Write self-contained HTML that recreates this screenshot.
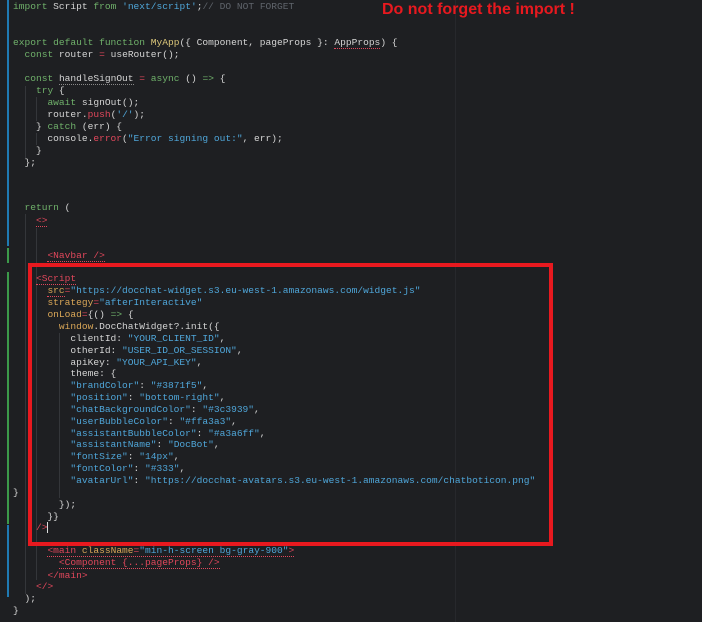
<!DOCTYPE html>
<html><head><meta charset="utf-8"><style>
html,body{margin:0;padding:0;background:#1e1f22;width:702px;height:622px;overflow:hidden;position:relative}
.l{position:absolute;left:13px;height:12px;line-height:12px;font-family:"Liberation Mono",monospace;font-size:9.57px;color:#d4d4d4;white-space:pre}
.k{color:#6fb06a}.s{color:#4fa6d9}.c{color:#5f646b}.f{color:#dcc77a}.r{color:#e0475b}.a{color:#d9a657}.w{color:#d4d4d4}
.u{border-bottom:1px dotted #e0475b}
.bar{position:absolute;left:7px;width:2px}
.g{position:absolute;width:1px;background:#34363a}
</style></head><body>
<div class="g" style="left:455px;top:0;height:622px;background:#27282c"></div>
<div class="bar" style="top:0;height:246px;background:#1f7ab3"></div>
<div class="bar" style="top:248px;height:15px;background:#3c9a4a"></div>
<div class="bar" style="top:272px;height:252px;background:#3c9a4a"></div>
<div class="bar" style="top:525px;height:72px;background:#1f7ab3"></div>
<div class="g" style="left:25px;top:86px;height:72px"></div>
<div class="g" style="left:36px;top:97px;height:24px"></div>
<div class="g" style="left:36px;top:133px;height:12px"></div>
<div class="g" style="left:25px;top:214px;height:380px"></div>
<div class="g" style="left:36px;top:228px;height:352px"></div>
<div class="g" style="left:59px;top:333px;height:165px"></div>

<div style="position:absolute;left:382px;top:1px;font-family:'Liberation Sans',sans-serif;font-weight:bold;font-size:16px;color:#e8191f;line-height:18px">Do not forget the import !</div>
<div style="position:absolute;left:28px;top:263px;width:517px;height:275px;border:4px solid #e8191f"></div>

<div class="l" style="top:1px"><span class="k">import</span> Script <span class="k">from</span> <span class="s">'next/script'</span>;<span class="c">// DO NOT FORGET</span></div>
<div class="l" style="top:37px"><span class="k">export default function</span> <span class="f">MyApp</span>({ Component, pageProps }: <span class="u">AppProps</span>) {</div>
<div class="l" style="top:49px">  <span class="k">const</span> router <span class="r">=</span> useRouter();</div>
<div class="l" style="top:73px">  <span class="k">const</span> <span style="border-bottom:1px dotted #888">handleSignOut</span> <span class="r">=</span> <span class="k">async</span> () <span class="k">=&gt;</span> {</div>
<div class="l" style="top:85px">    <span class="k">try</span> {</div>
<div class="l" style="top:97px">      <span class="k">await</span> signOut();</div>
<div class="l" style="top:109px">      router.<span class="r">push</span>(<span class="s">'/'</span>);</div>
<div class="l" style="top:121px">    } <span class="k">catch</span> (err) {</div>
<div class="l" style="top:133px">      console.<span class="r">error</span>(<span class="s">"Error signing out:"</span>, err);</div>
<div class="l" style="top:145px">    }</div>
<div class="l" style="top:157px">  };</div>
<div class="l" style="top:202px">  <span class="k">return</span> (</div>
<div class="l" style="top:215px">    <span class="r u">&lt;&gt;</span></div>
<div class="l" style="top:250px">      <span class="r u">&lt;Navbar /&gt;</span></div>
<div class="l" style="top:273px">    <span class="r u">&lt;Script</span></div>
<div class="l" style="top:285px">      <span class="a u">src</span><span class="r">=</span><span class="s">"https://docchat-widget.s3.eu-west-1.amazonaws.com/widget.js"</span></div>
<div class="l" style="top:297px">      <span class="a">strategy</span><span class="r">=</span><span class="s">"afterInteractive"</span></div>
<div class="l" style="top:309px">      <span class="a">onLoad</span><span class="r">=</span>{() <span class="k">=&gt;</span> {</div>
<div class="l" style="top:321px">        <span class="a">window</span>.DocChatWidget?.init({</div>
<div class="l" style="top:333px">          clientId: <span class="s">"YOUR_CLIENT_ID"</span>,</div>
<div class="l" style="top:345px">          otherId: <span class="s">"USER_ID_OR_SESSION"</span>,</div>
<div class="l" style="top:357px">          apiKey: <span class="s">"YOUR_API_KEY"</span>,</div>
<div class="l" style="top:368px">          theme: {</div>
<div class="l" style="top:380px">          <span class="s">"brandColor"</span>: <span class="s">"#3871f5"</span>,</div>
<div class="l" style="top:392px">          <span class="s">"position"</span>: <span class="s">"bottom-right"</span>,</div>
<div class="l" style="top:404px">          <span class="s">"chatBackgroundColor"</span>: <span class="s">"#3c3939"</span>,</div>
<div class="l" style="top:416px">          <span class="s">"userBubbleColor"</span>: <span class="s">"#ffa3a3"</span>,</div>
<div class="l" style="top:428px">          <span class="s">"assistantBubbleColor"</span>: <span class="s">"#a3a6ff"</span>,</div>
<div class="l" style="top:439px">          <span class="s">"assistantName"</span>: <span class="s">"DocBot"</span>,</div>
<div class="l" style="top:451px">          <span class="s">"fontSize"</span>: <span class="s">"14px"</span>,</div>
<div class="l" style="top:463px">          <span class="s">"fontColor"</span>: <span class="s">"#333"</span>,</div>
<div class="l" style="top:475px">          <span class="s">"avatarUrl"</span>: <span class="s">"https://docchat-avatars.s3.eu-west-1.amazonaws.com/chatboticon.png"</span></div>
<div class="l" style="top:487px">}</div>
<div class="l" style="top:499px">        });</div>
<div class="l" style="top:511px">      }}</div>
<div class="l" style="top:522px">    <span class="r">/&gt;</span><span style="border-left:1px solid #ddd"></span></div>
<div class="l" style="top:545px">      <span class="u"><span class="r">&lt;main</span> <span class="a">className</span><span class="r">=</span><span class="s">"min-h-screen bg-gray-900"</span><span class="r">&gt;</span></span></div>
<div class="l" style="top:557px">        <span class="r u">&lt;Component {...pageProps} /&gt;</span></div>
<div class="l" style="top:570px">      <span class="r">&lt;/main&gt;</span></div>
<div class="l" style="top:581px">    <span class="r">&lt;/&gt;</span></div>
<div class="l" style="top:593px">  );</div>
<div class="l" style="top:605px">}</div>
</body></html>
